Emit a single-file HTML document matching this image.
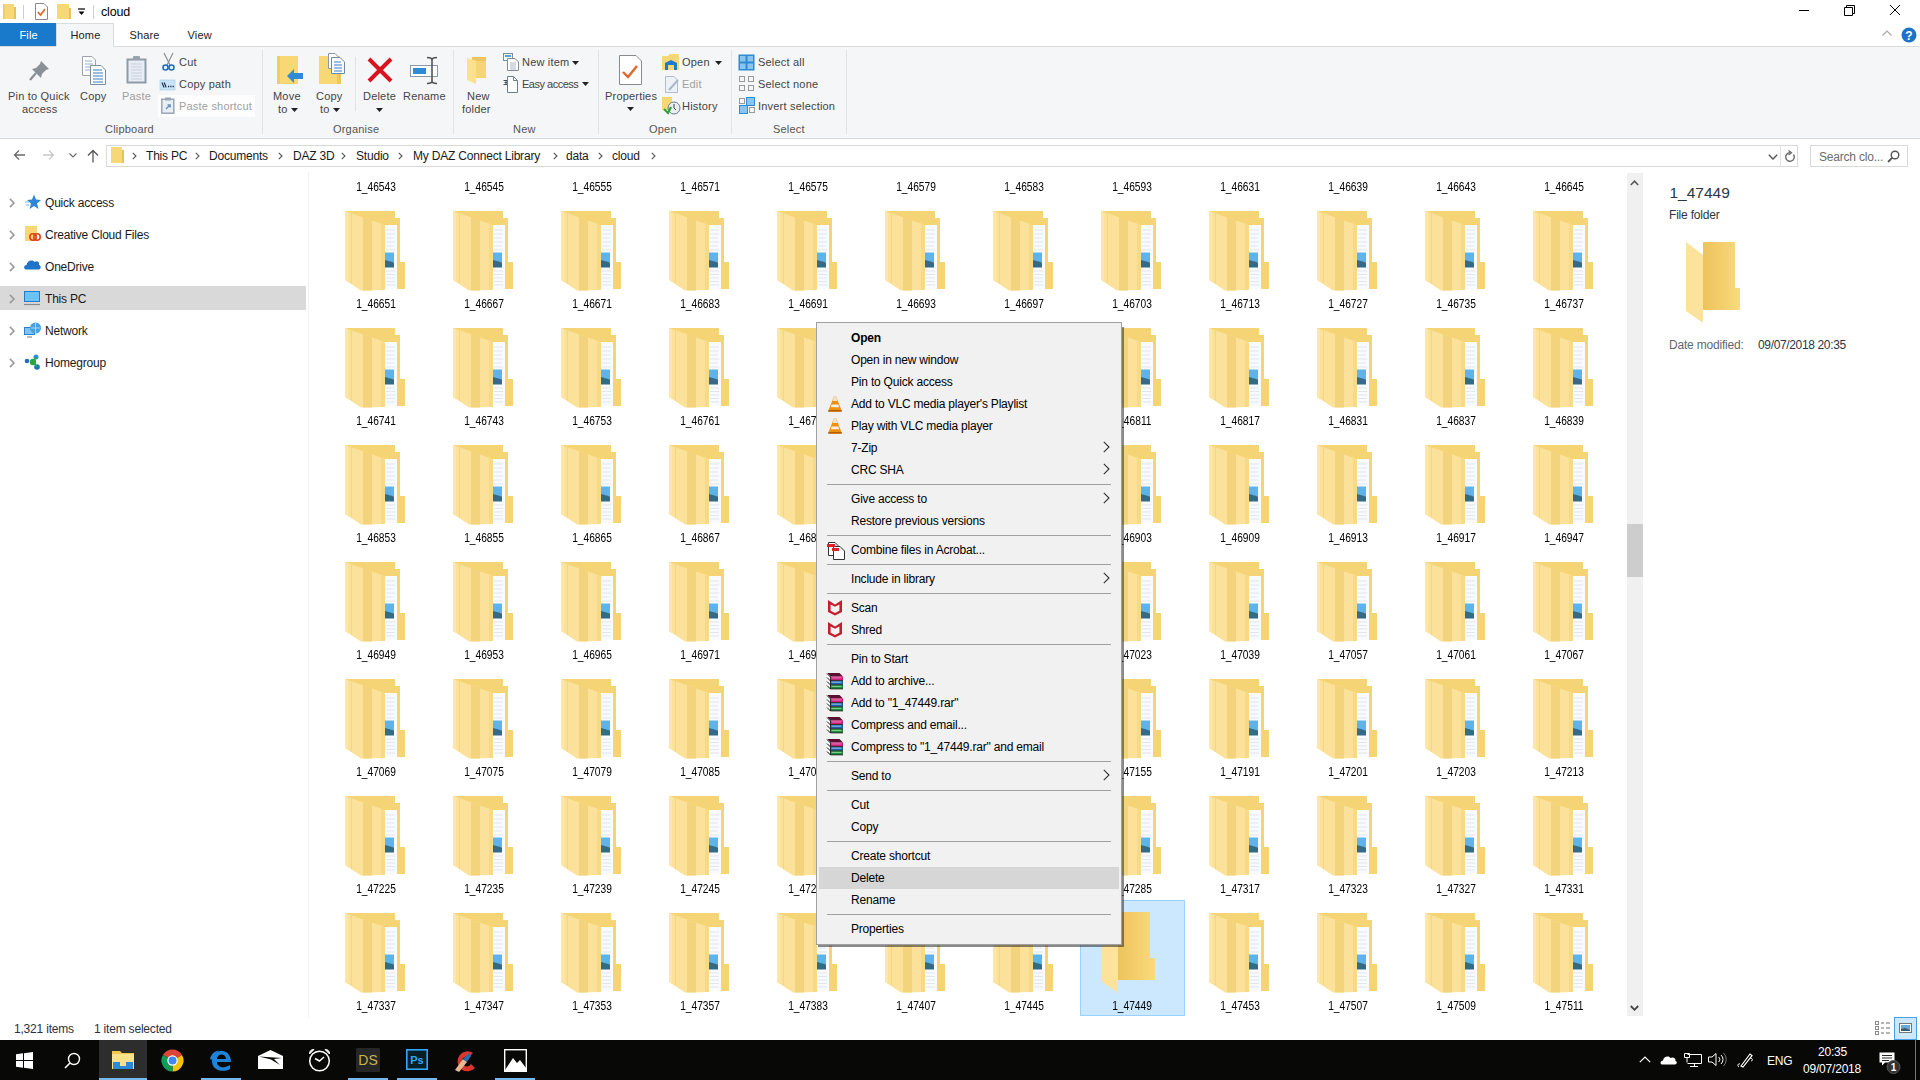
<!DOCTYPE html>
<html><head><meta charset="utf-8"><title>cloud</title><style>
*{margin:0;padding:0;box-sizing:border-box}
html,body{width:1920px;height:1080px;overflow:hidden;background:#fff;font-family:"Liberation Sans",sans-serif;font-size:12px;color:#000}
.a{position:absolute;white-space:nowrap}
.t{position:absolute;white-space:nowrap;line-height:16px;height:16px;letter-spacing:-0.2px}
.g{color:#8d8d8d}
.lbl{position:absolute;white-space:nowrap;line-height:16px;height:16px;width:108px;text-align:center;color:#000;transform:scaleX(0.85)}
svg{position:absolute;overflow:visible}
</style></head>
<body>

<svg width="0" height="0" style="position:absolute">
<defs>
<linearGradient id="gb" x1="0" y1="0" x2="1" y2="0"><stop offset="0" stop-color="#edc35c"/><stop offset="1" stop-color="#f9da7c"/></linearGradient>
<linearGradient id="gf" x1="0" y1="0" x2="1" y2="0"><stop offset="0" stop-color="#fbe39a"/><stop offset="1" stop-color="#f6d57a"/></linearGradient>
<symbol id="fd" viewBox="0 0 62 80">
 <path d="M0 0H50V7H55V51H60V78H38V14L0 2Z" fill="#f5d476"/>
 <path d="M39 14H52V78H39Z" fill="#f8fafc"/>
 <path d="M41 19h9M41 23h9M41 27h8M41 31h9M41 35h8M41 39h9M41 60h9M41 63.5h9M41 67h9M41 70.5h9M41 74h9" stroke="#d8dee6" stroke-width="0.7"/>
 <rect x="40" y="41.5" width="9" height="10" fill="#5fb3ec"/>
 <path d="M40 49L49 51.5V56.5H40Z" fill="#356a86"/>
 <path d="M0 0L40 14V79L16 79.5L0 69Z" fill="#fbe19a"/>
 <path d="M0 0L3 1V71L0 69Z" fill="#fce6a8"/>
 <path d="M6 2.1L7 2.5V73L6 72.3Z" fill="#f4d680"/>
 <path d="M18 6.3L27 9.4V79.5L18 79.5Z" fill="#f3d47c"/>
 <path d="M36 12.6L40 14V79L36 79Z" fill="#f7da86"/>
</symbol>
<symbol id="fe" viewBox="0 0 56 82">
 <path d="M17 0H49V46H54V68H17Z" fill="url(#gb)"/>
 <path d="M0 0L17 13V81L0 69Z" fill="#fce29a"/>
</symbol>
<symbol id="sf" viewBox="0 0 16 16">
 <path d="M1 2H6L7 3H15V14H1Z" fill="#dcb44f"/>
 <path d="M1 4H15V14H1Z" fill="#f8d775"/>
</symbol>
</defs>
</svg>

<svg style="left:13px;top:149px" width="13" height="12" viewBox="0 0 13 12"><path d="M12 6H1.5M6 1.5L1.5 6L6 10.5" fill="none" stroke="#6a6a6a" stroke-width="1.3"/></svg>
<svg style="left:42px;top:149px" width="13" height="12" viewBox="0 0 13 12"><path d="M1 6H11.5M7 1.5L11.5 6L7 10.5" fill="none" stroke="#c9c9c9" stroke-width="1.3"/></svg>
<svg style="left:69px;top:153px" width="8" height="5" viewBox="0 0 8 5"><path d="M0.5 0.5L4 4L7.5 0.5" fill="none" stroke="#6a6a6a" stroke-width="1.1"/></svg>
<svg style="left:87px;top:149px" width="12" height="14" viewBox="0 0 12 14"><path d="M6 13.5V1.5M1 6.5L6 1.5L11 6.5" fill="none" stroke="#555" stroke-width="1.3"/></svg>
<div class="a" style="left:106px;top:145px;width:1692px;height:22px;border:1px solid #d9d9d9"></div>
<div class="a" style="left:1780px;top:146px;width:1px;height:20px;background:#e3e3e3"></div>
<svg style="left:111px;top:147px" width="14" height="17" viewBox="0 0 14 17"><path d="M0 0H11V16H0Z" fill="#f7d879"/><path d="M11 3H13V16H11Z" fill="#e9c05a"/></svg>
<svg style="left:132px;top:152px" width="5" height="8" viewBox="0 0 5 8"><path d="M0.8 0.8L4 4L0.8 7.2" fill="none" stroke="#555" stroke-width="1.1"/></svg>
<svg style="left:195px;top:152px" width="5" height="8" viewBox="0 0 5 8"><path d="M0.8 0.8L4 4L0.8 7.2" fill="none" stroke="#555" stroke-width="1.1"/></svg>
<svg style="left:278px;top:152px" width="5" height="8" viewBox="0 0 5 8"><path d="M0.8 0.8L4 4L0.8 7.2" fill="none" stroke="#555" stroke-width="1.1"/></svg>
<svg style="left:341px;top:152px" width="5" height="8" viewBox="0 0 5 8"><path d="M0.8 0.8L4 4L0.8 7.2" fill="none" stroke="#555" stroke-width="1.1"/></svg>
<svg style="left:398px;top:152px" width="5" height="8" viewBox="0 0 5 8"><path d="M0.8 0.8L4 4L0.8 7.2" fill="none" stroke="#555" stroke-width="1.1"/></svg>
<svg style="left:553px;top:152px" width="5" height="8" viewBox="0 0 5 8"><path d="M0.8 0.8L4 4L0.8 7.2" fill="none" stroke="#555" stroke-width="1.1"/></svg>
<svg style="left:598px;top:152px" width="5" height="8" viewBox="0 0 5 8"><path d="M0.8 0.8L4 4L0.8 7.2" fill="none" stroke="#555" stroke-width="1.1"/></svg>
<svg style="left:651px;top:152px" width="5" height="8" viewBox="0 0 5 8"><path d="M0.8 0.8L4 4L0.8 7.2" fill="none" stroke="#555" stroke-width="1.1"/></svg>
<div class="t" style="left:146px;top:148.0px;color:#1a1a1a">This PC</div>
<div class="t" style="left:209px;top:148.0px;color:#1a1a1a">Documents</div>
<div class="t" style="left:293px;top:148.0px;color:#1a1a1a">DAZ 3D</div>
<div class="t" style="left:356px;top:148.0px;color:#1a1a1a">Studio</div>
<div class="t" style="left:413px;top:148.0px;color:#1a1a1a">My DAZ Connect Library</div>
<div class="t" style="left:566px;top:148.0px;color:#1a1a1a">data</div>
<div class="t" style="left:612px;top:148.0px;color:#1a1a1a">cloud</div>
<svg style="left:1768px;top:154px" width="10" height="6" viewBox="0 0 10 6"><path d="M0.8 0.8L5 5L9.2 0.8" fill="none" stroke="#555" stroke-width="1.4"/></svg>
<svg style="left:1784px;top:150px" width="12" height="13" viewBox="0 0 12 13"><path d="M9.5 4.5A4.3 4.3 0 1 1 6 2.7" fill="none" stroke="#6a6a6a" stroke-width="1.4"/><path d="M4.5 0.5L7.5 2.7L4.5 5" fill="none" stroke="#6a6a6a" stroke-width="1.3"/></svg>
<div class="a" style="left:1810px;top:145px;width:98px;height:22px;border:1px solid #d9d9d9"></div>
<div class="t" style="left:1819px;top:149.0px;color:#6d6d6d">Search clo...</div>
<svg style="left:1887px;top:150px" width="13" height="13" viewBox="0 0 13 13"><circle cx="8" cy="5" r="3.8" fill="none" stroke="#555" stroke-width="1.4"/><path d="M5.3 7.7L1 12" stroke="#555" stroke-width="1.8"/></svg>
<div class="a" style="left:0;top:286px;width:306px;height:24px;background:#d9d9d9"></div>
<svg style="left:9px;top:198px" width="6" height="10" viewBox="0 0 6 10"><path d="M0.9 0.9L5 5L0.9 9.1" fill="none" stroke="#9a9a9a" stroke-width="1.6"/></svg>
<div class="t" style="left:45px;top:194.5px;color:#1a1a1a">Quick access</div>
<svg style="left:9px;top:230px" width="6" height="10" viewBox="0 0 6 10"><path d="M0.9 0.9L5 5L0.9 9.1" fill="none" stroke="#9a9a9a" stroke-width="1.6"/></svg>
<div class="t" style="left:45px;top:226.5px;color:#1a1a1a">Creative Cloud Files</div>
<svg style="left:9px;top:262px" width="6" height="10" viewBox="0 0 6 10"><path d="M0.9 0.9L5 5L0.9 9.1" fill="none" stroke="#9a9a9a" stroke-width="1.6"/></svg>
<div class="t" style="left:45px;top:258.5px;color:#1a1a1a">OneDrive</div>
<svg style="left:9px;top:294px" width="6" height="10" viewBox="0 0 6 10"><path d="M0.9 0.9L5 5L0.9 9.1" fill="none" stroke="#9a9a9a" stroke-width="1.6"/></svg>
<div class="t" style="left:45px;top:290.5px;color:#1a1a1a">This PC</div>
<svg style="left:9px;top:326px" width="6" height="10" viewBox="0 0 6 10"><path d="M0.9 0.9L5 5L0.9 9.1" fill="none" stroke="#9a9a9a" stroke-width="1.6"/></svg>
<div class="t" style="left:45px;top:322.5px;color:#1a1a1a">Network</div>
<svg style="left:9px;top:358px" width="6" height="10" viewBox="0 0 6 10"><path d="M0.9 0.9L5 5L0.9 9.1" fill="none" stroke="#9a9a9a" stroke-width="1.6"/></svg>
<div class="t" style="left:45px;top:354.5px;color:#1a1a1a">Homegroup</div>
<svg style="left:25px;top:194px" width="16" height="16" viewBox="0 0 16 16"><path d="M9 0.5L11 5.5L16 6L12 9.5L13.5 15L9 12L4.5 15L6 9.5L2 6L7 5.5Z" fill="#2f86d6"/><path d="M0 8H4M1 11H4" stroke="#6fb3ea" stroke-width="1.2"/></svg>
<svg style="left:25px;top:226px" width="16" height="17" viewBox="0 0 16 17"><rect x="0" y="0" width="12" height="15" fill="#f7d879"/><circle cx="8" cy="11" r="3.2" fill="none" stroke="#e2401f" stroke-width="1.6"/><circle cx="12" cy="11" r="3.2" fill="none" stroke="#e2401f" stroke-width="1.6"/></svg>
<svg style="left:24px;top:258px" width="17" height="12" viewBox="0 0 17 12"><path d="M2 11.5C-0.5 11.5 -0.5 7 2.5 7C3 3 8 1 10.5 4C13 2 16 4 15 7C17.5 7.5 17 11.5 15 11.5Z" fill="#1f73c8"/></svg>
<svg style="left:24px;top:291px" width="17" height="15" viewBox="0 0 17 15"><rect x="0" y="0" width="16" height="11" fill="#1f7ad0"/><rect x="1" y="1" width="14" height="9" fill="#6cc1f5"/><path d="M0 13.5H16" stroke="#8a8a8a" stroke-width="1.2"/></svg>
<svg style="left:24px;top:322px" width="17" height="16" viewBox="0 0 17 16"><rect x="0" y="5" width="11" height="8" fill="#2b7fd0"/><rect x="1" y="6" width="9" height="6" fill="#7cc5f2"/><circle cx="11.5" cy="6" r="5.5" fill="#4aa0e0"/><path d="M7 6H16M11.5 0.5V11.5" stroke="#bfe3fa" stroke-width="0.8"/><path d="M3 15H8" stroke="#777"/></svg>
<svg style="left:24px;top:354px" width="17" height="16" viewBox="0 0 17 16"><circle cx="3" cy="7" r="2.3" fill="#1f6fc0"/><circle cx="12" cy="3" r="2.5" fill="#2a8ed8"/><circle cx="9" cy="8" r="3.2" fill="#2ba640"/><circle cx="13" cy="13" r="2.8" fill="#1f6fc0"/><path d="M9 8L12 3M9 8L13 13" stroke="#2ba640" stroke-width="1.5"/></svg>
<div class="a" style="left:308px;top:172px;width:1px;height:846px;background:#f2f2f2"></div>
<div class="a" style="left:1080px;top:900px;width:105px;height:116px;background:#cce8ff;border:1px solid #99d1ff"></div>
<div class="lbl" style="left:322px;top:179px">1_46543</div>
<div class="lbl" style="left:430px;top:179px">1_46545</div>
<div class="lbl" style="left:538px;top:179px">1_46555</div>
<div class="lbl" style="left:646px;top:179px">1_46571</div>
<div class="lbl" style="left:754px;top:179px">1_46575</div>
<div class="lbl" style="left:862px;top:179px">1_46579</div>
<div class="lbl" style="left:970px;top:179px">1_46583</div>
<div class="lbl" style="left:1078px;top:179px">1_46593</div>
<div class="lbl" style="left:1186px;top:179px">1_46631</div>
<div class="lbl" style="left:1294px;top:179px">1_46639</div>
<div class="lbl" style="left:1402px;top:179px">1_46643</div>
<div class="lbl" style="left:1510px;top:179px">1_46645</div>
<svg style="left:345px;top:210.5px" width="62" height="80"><use href="#fd"/></svg>
<div class="lbl" style="left:322px;top:296px">1_46651</div>
<svg style="left:453px;top:210.5px" width="62" height="80"><use href="#fd"/></svg>
<div class="lbl" style="left:430px;top:296px">1_46667</div>
<svg style="left:561px;top:210.5px" width="62" height="80"><use href="#fd"/></svg>
<div class="lbl" style="left:538px;top:296px">1_46671</div>
<svg style="left:669px;top:210.5px" width="62" height="80"><use href="#fd"/></svg>
<div class="lbl" style="left:646px;top:296px">1_46683</div>
<svg style="left:777px;top:210.5px" width="62" height="80"><use href="#fd"/></svg>
<div class="lbl" style="left:754px;top:296px">1_46691</div>
<svg style="left:885px;top:210.5px" width="62" height="80"><use href="#fd"/></svg>
<div class="lbl" style="left:862px;top:296px">1_46693</div>
<svg style="left:993px;top:210.5px" width="62" height="80"><use href="#fd"/></svg>
<div class="lbl" style="left:970px;top:296px">1_46697</div>
<svg style="left:1101px;top:210.5px" width="62" height="80"><use href="#fd"/></svg>
<div class="lbl" style="left:1078px;top:296px">1_46703</div>
<svg style="left:1209px;top:210.5px" width="62" height="80"><use href="#fd"/></svg>
<div class="lbl" style="left:1186px;top:296px">1_46713</div>
<svg style="left:1317px;top:210.5px" width="62" height="80"><use href="#fd"/></svg>
<div class="lbl" style="left:1294px;top:296px">1_46727</div>
<svg style="left:1425px;top:210.5px" width="62" height="80"><use href="#fd"/></svg>
<div class="lbl" style="left:1402px;top:296px">1_46735</div>
<svg style="left:1533px;top:210.5px" width="62" height="80"><use href="#fd"/></svg>
<div class="lbl" style="left:1510px;top:296px">1_46737</div>
<svg style="left:345px;top:327.5px" width="62" height="80"><use href="#fd"/></svg>
<div class="lbl" style="left:322px;top:413px">1_46741</div>
<svg style="left:453px;top:327.5px" width="62" height="80"><use href="#fd"/></svg>
<div class="lbl" style="left:430px;top:413px">1_46743</div>
<svg style="left:561px;top:327.5px" width="62" height="80"><use href="#fd"/></svg>
<div class="lbl" style="left:538px;top:413px">1_46753</div>
<svg style="left:669px;top:327.5px" width="62" height="80"><use href="#fd"/></svg>
<div class="lbl" style="left:646px;top:413px">1_46761</div>
<svg style="left:777px;top:327.5px" width="62" height="80"><use href="#fd"/></svg>
<div class="lbl" style="left:754px;top:413px">1_46763</div>
<svg style="left:885px;top:327.5px" width="62" height="80"><use href="#fd"/></svg>
<div class="lbl" style="left:862px;top:413px">1_46779</div>
<svg style="left:993px;top:327.5px" width="62" height="80"><use href="#fd"/></svg>
<div class="lbl" style="left:970px;top:413px">1_46787</div>
<svg style="left:1101px;top:327.5px" width="62" height="80"><use href="#fd"/></svg>
<div class="lbl" style="left:1078px;top:413px">1_46811</div>
<svg style="left:1209px;top:327.5px" width="62" height="80"><use href="#fd"/></svg>
<div class="lbl" style="left:1186px;top:413px">1_46817</div>
<svg style="left:1317px;top:327.5px" width="62" height="80"><use href="#fd"/></svg>
<div class="lbl" style="left:1294px;top:413px">1_46831</div>
<svg style="left:1425px;top:327.5px" width="62" height="80"><use href="#fd"/></svg>
<div class="lbl" style="left:1402px;top:413px">1_46837</div>
<svg style="left:1533px;top:327.5px" width="62" height="80"><use href="#fd"/></svg>
<div class="lbl" style="left:1510px;top:413px">1_46839</div>
<svg style="left:345px;top:444.5px" width="62" height="80"><use href="#fd"/></svg>
<div class="lbl" style="left:322px;top:530px">1_46853</div>
<svg style="left:453px;top:444.5px" width="62" height="80"><use href="#fd"/></svg>
<div class="lbl" style="left:430px;top:530px">1_46855</div>
<svg style="left:561px;top:444.5px" width="62" height="80"><use href="#fd"/></svg>
<div class="lbl" style="left:538px;top:530px">1_46865</div>
<svg style="left:669px;top:444.5px" width="62" height="80"><use href="#fd"/></svg>
<div class="lbl" style="left:646px;top:530px">1_46867</div>
<svg style="left:777px;top:444.5px" width="62" height="80"><use href="#fd"/></svg>
<div class="lbl" style="left:754px;top:530px">1_46871</div>
<svg style="left:885px;top:444.5px" width="62" height="80"><use href="#fd"/></svg>
<div class="lbl" style="left:862px;top:530px">1_46883</div>
<svg style="left:993px;top:444.5px" width="62" height="80"><use href="#fd"/></svg>
<div class="lbl" style="left:970px;top:530px">1_46891</div>
<svg style="left:1101px;top:444.5px" width="62" height="80"><use href="#fd"/></svg>
<div class="lbl" style="left:1078px;top:530px">1_46903</div>
<svg style="left:1209px;top:444.5px" width="62" height="80"><use href="#fd"/></svg>
<div class="lbl" style="left:1186px;top:530px">1_46909</div>
<svg style="left:1317px;top:444.5px" width="62" height="80"><use href="#fd"/></svg>
<div class="lbl" style="left:1294px;top:530px">1_46913</div>
<svg style="left:1425px;top:444.5px" width="62" height="80"><use href="#fd"/></svg>
<div class="lbl" style="left:1402px;top:530px">1_46917</div>
<svg style="left:1533px;top:444.5px" width="62" height="80"><use href="#fd"/></svg>
<div class="lbl" style="left:1510px;top:530px">1_46947</div>
<svg style="left:345px;top:561.5px" width="62" height="80"><use href="#fd"/></svg>
<div class="lbl" style="left:322px;top:647px">1_46949</div>
<svg style="left:453px;top:561.5px" width="62" height="80"><use href="#fd"/></svg>
<div class="lbl" style="left:430px;top:647px">1_46953</div>
<svg style="left:561px;top:561.5px" width="62" height="80"><use href="#fd"/></svg>
<div class="lbl" style="left:538px;top:647px">1_46965</div>
<svg style="left:669px;top:561.5px" width="62" height="80"><use href="#fd"/></svg>
<div class="lbl" style="left:646px;top:647px">1_46971</div>
<svg style="left:777px;top:561.5px" width="62" height="80"><use href="#fd"/></svg>
<div class="lbl" style="left:754px;top:647px">1_46981</div>
<svg style="left:885px;top:561.5px" width="62" height="80"><use href="#fd"/></svg>
<div class="lbl" style="left:862px;top:647px">1_46993</div>
<svg style="left:993px;top:561.5px" width="62" height="80"><use href="#fd"/></svg>
<div class="lbl" style="left:970px;top:647px">1_47001</div>
<svg style="left:1101px;top:561.5px" width="62" height="80"><use href="#fd"/></svg>
<div class="lbl" style="left:1078px;top:647px">1_47023</div>
<svg style="left:1209px;top:561.5px" width="62" height="80"><use href="#fd"/></svg>
<div class="lbl" style="left:1186px;top:647px">1_47039</div>
<svg style="left:1317px;top:561.5px" width="62" height="80"><use href="#fd"/></svg>
<div class="lbl" style="left:1294px;top:647px">1_47057</div>
<svg style="left:1425px;top:561.5px" width="62" height="80"><use href="#fd"/></svg>
<div class="lbl" style="left:1402px;top:647px">1_47061</div>
<svg style="left:1533px;top:561.5px" width="62" height="80"><use href="#fd"/></svg>
<div class="lbl" style="left:1510px;top:647px">1_47067</div>
<svg style="left:345px;top:678.5px" width="62" height="80"><use href="#fd"/></svg>
<div class="lbl" style="left:322px;top:764px">1_47069</div>
<svg style="left:453px;top:678.5px" width="62" height="80"><use href="#fd"/></svg>
<div class="lbl" style="left:430px;top:764px">1_47075</div>
<svg style="left:561px;top:678.5px" width="62" height="80"><use href="#fd"/></svg>
<div class="lbl" style="left:538px;top:764px">1_47079</div>
<svg style="left:669px;top:678.5px" width="62" height="80"><use href="#fd"/></svg>
<div class="lbl" style="left:646px;top:764px">1_47085</div>
<svg style="left:777px;top:678.5px" width="62" height="80"><use href="#fd"/></svg>
<div class="lbl" style="left:754px;top:764px">1_47091</div>
<svg style="left:885px;top:678.5px" width="62" height="80"><use href="#fd"/></svg>
<div class="lbl" style="left:862px;top:764px">1_47109</div>
<svg style="left:993px;top:678.5px" width="62" height="80"><use href="#fd"/></svg>
<div class="lbl" style="left:970px;top:764px">1_47131</div>
<svg style="left:1101px;top:678.5px" width="62" height="80"><use href="#fd"/></svg>
<div class="lbl" style="left:1078px;top:764px">1_47155</div>
<svg style="left:1209px;top:678.5px" width="62" height="80"><use href="#fd"/></svg>
<div class="lbl" style="left:1186px;top:764px">1_47191</div>
<svg style="left:1317px;top:678.5px" width="62" height="80"><use href="#fd"/></svg>
<div class="lbl" style="left:1294px;top:764px">1_47201</div>
<svg style="left:1425px;top:678.5px" width="62" height="80"><use href="#fd"/></svg>
<div class="lbl" style="left:1402px;top:764px">1_47203</div>
<svg style="left:1533px;top:678.5px" width="62" height="80"><use href="#fd"/></svg>
<div class="lbl" style="left:1510px;top:764px">1_47213</div>
<svg style="left:345px;top:795.5px" width="62" height="80"><use href="#fd"/></svg>
<div class="lbl" style="left:322px;top:881px">1_47225</div>
<svg style="left:453px;top:795.5px" width="62" height="80"><use href="#fd"/></svg>
<div class="lbl" style="left:430px;top:881px">1_47235</div>
<svg style="left:561px;top:795.5px" width="62" height="80"><use href="#fd"/></svg>
<div class="lbl" style="left:538px;top:881px">1_47239</div>
<svg style="left:669px;top:795.5px" width="62" height="80"><use href="#fd"/></svg>
<div class="lbl" style="left:646px;top:881px">1_47245</div>
<svg style="left:777px;top:795.5px" width="62" height="80"><use href="#fd"/></svg>
<div class="lbl" style="left:754px;top:881px">1_47251</div>
<svg style="left:885px;top:795.5px" width="62" height="80"><use href="#fd"/></svg>
<div class="lbl" style="left:862px;top:881px">1_47263</div>
<svg style="left:993px;top:795.5px" width="62" height="80"><use href="#fd"/></svg>
<div class="lbl" style="left:970px;top:881px">1_47271</div>
<svg style="left:1101px;top:795.5px" width="62" height="80"><use href="#fd"/></svg>
<div class="lbl" style="left:1078px;top:881px">1_47285</div>
<svg style="left:1209px;top:795.5px" width="62" height="80"><use href="#fd"/></svg>
<div class="lbl" style="left:1186px;top:881px">1_47317</div>
<svg style="left:1317px;top:795.5px" width="62" height="80"><use href="#fd"/></svg>
<div class="lbl" style="left:1294px;top:881px">1_47323</div>
<svg style="left:1425px;top:795.5px" width="62" height="80"><use href="#fd"/></svg>
<div class="lbl" style="left:1402px;top:881px">1_47327</div>
<svg style="left:1533px;top:795.5px" width="62" height="80"><use href="#fd"/></svg>
<div class="lbl" style="left:1510px;top:881px">1_47331</div>
<svg style="left:345px;top:912.5px" width="62" height="80"><use href="#fd"/></svg>
<div class="lbl" style="left:322px;top:998px">1_47337</div>
<svg style="left:453px;top:912.5px" width="62" height="80"><use href="#fd"/></svg>
<div class="lbl" style="left:430px;top:998px">1_47347</div>
<svg style="left:561px;top:912.5px" width="62" height="80"><use href="#fd"/></svg>
<div class="lbl" style="left:538px;top:998px">1_47353</div>
<svg style="left:669px;top:912.5px" width="62" height="80"><use href="#fd"/></svg>
<div class="lbl" style="left:646px;top:998px">1_47357</div>
<svg style="left:777px;top:912.5px" width="62" height="80"><use href="#fd"/></svg>
<div class="lbl" style="left:754px;top:998px">1_47383</div>
<svg style="left:885px;top:912.5px" width="62" height="80"><use href="#fd"/></svg>
<div class="lbl" style="left:862px;top:998px">1_47407</div>
<svg style="left:993px;top:912.5px" width="62" height="80"><use href="#fd"/></svg>
<div class="lbl" style="left:970px;top:998px">1_47445</div>
<svg style="left:1101px;top:911.5px" width="56" height="82"><use href="#fe"/></svg>
<div class="lbl" style="left:1078px;top:998px">1_47449</div>
<svg style="left:1209px;top:912.5px" width="62" height="80"><use href="#fd"/></svg>
<div class="lbl" style="left:1186px;top:998px">1_47453</div>
<svg style="left:1317px;top:912.5px" width="62" height="80"><use href="#fd"/></svg>
<div class="lbl" style="left:1294px;top:998px">1_47507</div>
<svg style="left:1425px;top:912.5px" width="62" height="80"><use href="#fd"/></svg>
<div class="lbl" style="left:1402px;top:998px">1_47509</div>
<svg style="left:1533px;top:912.5px" width="62" height="80"><use href="#fd"/></svg>
<div class="lbl" style="left:1510px;top:998px">1_47511</div>
<div class="a" style="left:1627px;top:173px;width:16px;height:843px;background:#f0f0f0"></div>
<div class="a" style="left:1627px;top:524px;width:16px;height:53px;background:#cdcdcd"></div>
<svg style="left:1630px;top:180px" width="9" height="6" viewBox="0 0 9 6"><path d="M0.8 5L4.5 1.2L8.2 5" fill="none" stroke="#555" stroke-width="1.5"/></svg>
<svg style="left:1630px;top:1005px" width="9" height="6" viewBox="0 0 9 6"><path d="M0.8 1L4.5 4.8L8.2 1" fill="none" stroke="#444" stroke-width="1.8"/></svg>
<div class="t" style="left:1669.5px;top:184.5px;font-size:15.5px;color:#2a3645;letter-spacing:0px">1_47449</div>
<div class="t" style="left:1669px;top:207.0px;color:#2a3645">File folder</div>
<svg style="left:1686px;top:242px" width="56" height="82" viewBox="0 0 56 82"><use href="#fe"/></svg>
<div class="t" style="left:1669px;top:337.0px;color:#5f6873">Date modified:</div>
<div class="t" style="left:1758px;top:337.0px;color:#2a3645;letter-spacing:-0.35px">09/07/2018 20:35</div>
<div class="t" style="left:14px;top:1021.0px;color:#2a3240">1,321 items</div>
<div class="t" style="left:94px;top:1021.0px;color:#2a3240">1 item selected</div>
<svg style="left:1875px;top:1021px" width="16" height="14" viewBox="0 0 16 14"><rect x="0.5" y="0.5" width="3" height="3" fill="none" stroke="#888"/><rect x="0.5" y="5.5" width="3" height="3" fill="none" stroke="#888"/><rect x="0.5" y="10.5" width="3" height="3" fill="none" stroke="#888"/><path d="M6 2H9M11 2H15M6 7H9M11 7H15M6 12H9M11 12H15" stroke="#6a6a6a"/></svg>
<div class="a" style="left:1894px;top:1017px;width:23px;height:23px;background:#cce8ff;border:1px solid #4aa0e6"></div>
<svg style="left:1899px;top:1023px" width="13" height="10" viewBox="0 0 13 10"><rect x="0.5" y="0.5" width="12" height="9" fill="#fff" stroke="#777"/><rect x="2" y="2" width="9" height="6" fill="#6aa8d8"/><path d="M2 6L6 5L11 7V8H2Z" fill="#3a5a6a"/></svg>
<svg style="left:3px;top:4px" width="14" height="16" viewBox="0 0 14 16"><path d="M0 0H11V15H0Z" fill="#f7d879"/><path d="M11 3H13V15H11Z" fill="#e9c05a"/><path d="M0 0H2V15H0Z" fill="#f0cc6a"/></svg>
<div class="a" style="left:23px;top:5px;width:1px;height:14px;background:#cfcfcf"></div>
<svg style="left:35px;top:3px" width="13" height="17" viewBox="0 0 13 17"><path d="M0.5 0.5H9L12.5 4V16.5H0.5Z" fill="#fff" stroke="#8a8a8a"/><path d="M3 9L5.5 12L10 6" fill="none" stroke="#e06b2d" stroke-width="1.8"/></svg>
<svg style="left:57px;top:4px" width="14" height="16" viewBox="0 0 14 16"><path d="M0 0H12V15H0Z" fill="#f7d879"/><path d="M12 4H14V15H12Z" fill="#e9c05a"/></svg>
<svg style="left:78px;top:8px" width="8" height="8" viewBox="0 0 8 8"><path d="M0 1H7" stroke="#000" stroke-width="1.2"/><path d="M0.5 3.5H6.5L3.5 7Z" fill="#000"/></svg>
<div class="a" style="left:93px;top:5px;width:1px;height:14px;background:#cfcfcf"></div>
<div class="t" style="left:101px;top:4.0px;font-size:12.5px">cloud</div>
<div class="a" style="left:1799px;top:10px;width:10px;height:1px;background:#000"></div>
<svg style="left:1844px;top:5px" width="11" height="11" viewBox="0 0 11 11"><path d="M0.5 2.5H8.5V10.5H0.5Z M2.5 2.5V0.5H10.5V8.5H8.5" fill="none" stroke="#000"/></svg>
<svg style="left:1890px;top:5px" width="10" height="10" viewBox="0 0 10 10"><path d="M0 0L10 10M10 0L0 10" stroke="#000" stroke-width="1"/></svg>
<div class="a" style="left:0;top:23px;width:56px;height:23px;background:#1979ca"></div>
<div class="t" style="left:19.5px;top:27.0px;color:#fff;font-size:11px;letter-spacing:0.15px">File</div>
<div class="a" style="left:56px;top:23px;width:58px;height:24px;background:#f5f6f7;border:1px solid #dadbdc;border-bottom:none"></div>
<div class="t" style="left:70.5px;top:27.0px;font-size:11px;letter-spacing:0.15px;color:#222">Home</div>
<div class="t" style="left:129.4px;top:27.0px;font-size:11px;letter-spacing:0.15px;color:#222">Share</div>
<div class="t" style="left:187.5px;top:27.0px;font-size:11px;letter-spacing:0.15px;color:#222">View</div>
<div class="a" style="left:0;top:46px;width:1920px;height:93px;background:#f5f6f7;border-top:1px solid #dadbdc;border-bottom:1px solid #dadbdc"></div>
<div class="a" style="left:56px;top:46px;width:57px;height:1px;background:#f5f6f7"></div>
<svg style="left:1882px;top:30px" width="10" height="6" viewBox="0 0 10 6"><path d="M0.5 5.5L5 1L9.5 5.5" fill="none" stroke="#aaa" stroke-width="1.2"/></svg>
<svg style="left:1901px;top:27px" width="16" height="16" viewBox="0 0 16 16"><circle cx="8" cy="8" r="7.5" fill="#1e73c8"/><text x="8" y="12.5" font-family="Liberation Sans" font-weight="bold" font-size="12" fill="#fff" text-anchor="middle">?</text></svg>
<div class="a" style="left:262px;top:50px;width:1px;height:84px;background:#e2e3e4"></div>
<div class="a" style="left:453px;top:50px;width:1px;height:84px;background:#e2e3e4"></div>
<div class="a" style="left:598px;top:50px;width:1px;height:84px;background:#e2e3e4"></div>
<div class="a" style="left:731px;top:50px;width:1px;height:84px;background:#e2e3e4"></div>
<div class="a" style="left:846px;top:50px;width:1px;height:84px;background:#e2e3e4"></div>
<div class="a" style="left:355px;top:57px;width:1px;height:54px;background:#e2e3e4"></div>
<div class="a" style="left:158px;top:95px;width:97px;height:22px;background:#fdfdfd"></div>
<svg style="left:29px;top:60px" width="21" height="21" viewBox="0 0 21 21"><path d="M12 1L20 9L17 10L13 14L12 18L3 9L7 8L11 4Z" fill="#8a9096"/><path d="M7 13L1 20" stroke="#8a9096" stroke-width="2.2"/></svg>
<svg style="left:82px;top:56px" width="25" height="29" viewBox="0 0 25 29"><path d="M0.5 0.5H10L13.5 4V19.5H0.5Z" fill="#fff" stroke="#9aa3ad"/><path d="M3 5h7M3 8h8M3 11h8M3 14h8" stroke="#8fb0d6"/><path d="M8.5 9.5H19L23.5 14V28.5H8.5Z" fill="#fff" stroke="#7f8c99"/><path d="M11 14h9M11 17h10M11 20h10M11 23h10M11 26h10" stroke="#3a7cc8"/></svg>
<svg style="left:126px;top:55px" width="21" height="30" viewBox="0 0 21 30"><rect x="0.5" y="3.5" width="20" height="25" fill="#8e9aa6"/><rect x="2.5" y="5.5" width="16" height="21" fill="#e8ecf4"/><path d="M5 9h11M5 12h11M5 15h11M5 18h11M5 21h11M5 24h11" stroke="#c9d0dc"/><rect x="7" y="1" width="7" height="4" rx="1" fill="#9aa3ad"/></svg>
<svg style="left:162px;top:53px" width="13" height="18" viewBox="0 0 13 18"><path d="M2 0L8 12M11 0L5 12" stroke="#8a9096" stroke-width="1.2"/><circle cx="3.5" cy="14.5" r="2.5" fill="none" stroke="#1e6fc0" stroke-width="1.6"/><circle cx="9.5" cy="14.5" r="2.5" fill="none" stroke="#1e6fc0" stroke-width="1.6"/></svg>
<svg style="left:160px;top:80px" width="16" height="10" viewBox="0 0 16 10"><rect x="0" y="0" width="15" height="10" fill="#c9e4f8" stroke="#a6c8e6" stroke-width="0.6"/><path d="M2 2.5L4 7.5M4.2 2.5L6.2 7.5" stroke="#14284a" stroke-width="1.1"/><path d="M8 6.5h1.2M10.3 6.5h1.2M12.6 6.5h1.2" stroke="#14284a" stroke-width="1.3"/></svg>
<svg style="left:161px;top:97px" width="14" height="17" viewBox="0 0 14 17"><rect x="0.8" y="2.2" width="12" height="14" fill="#e8eef6" stroke="#9aa6b4" stroke-width="1.5"/><rect x="4" y="0.5" width="6" height="3" fill="#9aa6b4"/><path d="M5 12L9 8M6.5 7.8H9.2V10.5" stroke="#6b8fb8" fill="none" stroke-width="1.3"/></svg>
<div class="t" style="left:8px;top:88.0px;color:#444;font-size:11px;letter-spacing:0.2px">Pin to Quick</div>
<div class="t" style="left:22px;top:100.5px;color:#444;font-size:11px;letter-spacing:0.2px">access</div>
<div class="t" style="left:80px;top:88.0px;color:#444;font-size:11px;letter-spacing:0.2px">Copy</div>
<div class="t" style="left:122px;top:88.0px;color:#a0a0a0;font-size:11px;letter-spacing:0.2px">Paste</div>
<div class="t" style="left:179px;top:54.0px;color:#444;font-size:11px;letter-spacing:0.2px">Cut</div>
<div class="t" style="left:179px;top:76.0px;color:#444;font-size:11px;letter-spacing:0.2px">Copy path</div>
<div class="t" style="left:179px;top:98.0px;color:#a0a0a0;font-size:11px;letter-spacing:0.2px">Paste shortcut</div>
<div class="t" style="left:105px;top:121.0px;color:#555;font-size:11px;letter-spacing:0.2px">Clipboard</div>
<svg style="left:277px;top:56px" width="27" height="29" viewBox="0 0 27 29"><rect x="0" y="0" width="21" height="28" fill="#f8d775"/><rect x="0" y="0" width="3" height="28" fill="#f1cb63"/><path d="M10 20L17 13V17H26V23H17V27Z" fill="#2f8ad8"/></svg>
<svg style="left:319px;top:53px" width="27" height="32" viewBox="0 0 27 32"><rect x="0" y="3" width="21" height="28" fill="#f8d775"/><rect x="18" y="5" width="4" height="26" fill="#efc65e"/><path d="M9.5 0.5H16L19.5 4V15.5H9.5Z" fill="#fff" stroke="#8a97a4"/><path d="M12.5 4.5H21L25.5 9V20.5H12.5Z" fill="#fff" stroke="#6f8aa8"/><path d="M15 9h7M15 12h8M15 15h8M15 18h8" stroke="#3a7cc8"/></svg>
<svg style="left:367px;top:57px" width="26" height="26" viewBox="0 0 26 26"><path d="M2 2L24 24M24 2L2 24" stroke="#d9141e" stroke-width="4"/></svg>
<svg style="left:409px;top:56px" width="30" height="29" viewBox="0 0 30 29"><rect x="1.5" y="9.5" width="27" height="11" fill="#fff" stroke="#8a9aaa"/><rect x="4" y="12" width="13" height="6" fill="#2f8ad8"/><path d="M18 1.5C21 1.5 23 2 23 4V25C23 27 21 27.5 18 27.5M28 1.5C25 1.5 23 2 23 4V25C23 27 25 27.5 28 27.5" fill="none" stroke="#555" stroke-width="1.6"/></svg>
<div class="t" style="left:273px;top:88.0px;color:#444;font-size:11px;letter-spacing:0.2px">Move</div>
<div class="t" style="left:278px;top:100.5px;color:#444;font-size:11px;letter-spacing:0.2px">to</div>
<div class="t" style="left:316px;top:88.0px;color:#444;font-size:11px;letter-spacing:0.2px">Copy</div>
<div class="t" style="left:320px;top:100.5px;color:#444;font-size:11px;letter-spacing:0.2px">to</div>
<div class="t" style="left:363px;top:88.0px;color:#444;font-size:11px;letter-spacing:0.2px">Delete</div>
<div class="t" style="left:403px;top:88.0px;color:#444;font-size:11px;letter-spacing:0.2px">Rename</div>
<div class="t" style="left:333px;top:121.0px;color:#555;font-size:11px;letter-spacing:0.2px">Organise</div>
<svg style="left:291px;top:108px" width="7" height="4" viewBox="0 0 7 4"><path d="M0 0H7L3.5 4Z" fill="#222"/></svg>
<svg style="left:333px;top:108px" width="7" height="4" viewBox="0 0 7 4"><path d="M0 0H7L3.5 4Z" fill="#222"/></svg>
<svg style="left:376px;top:108px" width="7" height="4" viewBox="0 0 7 4"><path d="M0 0H7L3.5 4Z" fill="#222"/></svg>
<svg style="left:572px;top:61px" width="7" height="4" viewBox="0 0 7 4"><path d="M0 0H7L3.5 4Z" fill="#222"/></svg>
<svg style="left:582px;top:82px" width="7" height="4" viewBox="0 0 7 4"><path d="M0 0H7L3.5 4Z" fill="#222"/></svg>
<svg style="left:715px;top:61px" width="7" height="4" viewBox="0 0 7 4"><path d="M0 0H7L3.5 4Z" fill="#222"/></svg>
<svg style="left:627px;top:107px" width="7" height="4" viewBox="0 0 7 4"><path d="M0 0H7L3.5 4Z" fill="#222"/></svg>
<svg style="left:467px;top:57px" width="21" height="27" viewBox="0 0 21 27"><path d="M5 0H19V21H5Z" fill="#efc65e"/><path d="M0 1L9 4V27L0 23Z" fill="#fbe08e"/><path d="M9 4H19V21H9Z" fill="#f6d574"/></svg>
<svg style="left:503px;top:53px" width="17" height="18" viewBox="0 0 17 18"><rect x="0.5" y="0.5" width="9" height="7" fill="#fff" stroke="#7f8c99"/><rect x="2" y="2" width="6" height="2" fill="#5aa0dc"/><path d="M4.5 5.5H12L15.5 9V17.5H4.5Z" fill="#fff" stroke="#7f8c99"/><path d="M7 10h6M7 12h6M7 14h6M7 16h6" stroke="#aab6c2"/></svg>
<svg style="left:503px;top:75px" width="15" height="18" viewBox="0 0 15 18"><path d="M4.5 1.5H10.5L14.5 5.5V17.5H4.5Z" fill="#fff" stroke="#6f7c8a"/><path d="M10.5 1.5V5.5H14.5" fill="none" stroke="#6f7c8a"/><path d="M0.5 5.5H4M1.5 7.5H4M0.5 9.5H4M3 5V10" stroke="#3a4450" stroke-width="0.9"/></svg>
<div class="t" style="left:467px;top:88.0px;color:#444;font-size:11px;letter-spacing:0.2px">New</div>
<div class="t" style="left:462px;top:100.5px;color:#444;font-size:11px;letter-spacing:0.2px">folder</div>
<div class="t" style="left:522px;top:54.0px;color:#444;font-size:11px;letter-spacing:0.2px">New item</div>
<div class="t" style="left:522px;top:76.0px;color:#444;font-size:11px;letter-spacing:0.2px;letter-spacing:-0.5px">Easy access</div>
<div class="t" style="left:513px;top:121.0px;color:#555;font-size:11px;letter-spacing:0.2px">New</div>
<svg style="left:619px;top:55px" width="23" height="30" viewBox="0 0 23 30"><path d="M0.5 0.5H17L22.5 6V29.5H0.5Z" fill="#fff" stroke="#8a8a8a"/><path d="M4 17L9 22L18 11" fill="none" stroke="#e0652a" stroke-width="2.4"/></svg>
<svg style="left:662px;top:53px" width="18" height="18" viewBox="0 0 18 18"><path d="M0 3H6L8 1H17V17H0Z" fill="#f8d775"/><path d="M3 17V10L9 7L15 10V17H12V12H6V17Z" fill="#1f7ac8"/></svg>
<svg style="left:665px;top:76px" width="15" height="17" viewBox="0 0 15 17"><path d="M0.5 0.5H9L12.5 4V16.5H0.5Z" fill="#eef1f6" stroke="#b3bcc8"/><path d="M4 14L13 4" stroke="#aab6c8" stroke-width="2"/></svg>
<svg style="left:662px;top:97px" width="19" height="18" viewBox="0 0 19 18"><path d="M0 0H10V13H0Z" fill="#f8d775"/><circle cx="12" cy="11" r="6" fill="#e8eef4" stroke="#6a7a8a"/><path d="M12 7V11L14 13" stroke="#444" fill="none"/><path d="M2 12L6 16L9 10" stroke="#2ea43a" stroke-width="2.2" fill="none"/></svg>
<div class="t" style="left:605px;top:88.0px;color:#444;font-size:11px;letter-spacing:0.2px">Properties</div>
<div class="t" style="left:682px;top:54.0px;color:#444;font-size:11px;letter-spacing:0.2px">Open</div>
<div class="t" style="left:682px;top:76.0px;color:#a0a0a0;font-size:11px;letter-spacing:0.2px">Edit</div>
<div class="t" style="left:682px;top:98.0px;color:#444;font-size:11px;letter-spacing:0.2px">History</div>
<div class="t" style="left:649px;top:121.0px;color:#555;font-size:11px;letter-spacing:0.2px">Open</div>
<svg style="left:738px;top:54px" width="17" height="17" viewBox="0 0 17 17"><rect x="0.5" y="0.5" width="16" height="16" fill="#2f8ad8"/><rect x="2" y="2" width="5.5" height="5.5" fill="#8cc4f0"/><rect x="9.5" y="2" width="5.5" height="5.5" fill="#8cc4f0"/><rect x="2" y="9.5" width="5.5" height="5.5" fill="#8cc4f0"/><rect x="9.5" y="9.5" width="5.5" height="5.5" fill="#8cc4f0"/></svg>
<svg style="left:739px;top:76px" width="16" height="16" viewBox="0 0 16 16"><rect x="0.5" y="0.5" width="5" height="5" fill="none" stroke="#9a9a9a"/><rect x="9.5" y="0.5" width="5" height="5" fill="none" stroke="#9a9a9a"/><rect x="0.5" y="9.5" width="5" height="5" fill="none" stroke="#9a9a9a"/><rect x="9.5" y="9.5" width="5" height="5" fill="none" stroke="#9a9a9a"/></svg>
<svg style="left:739px;top:97px" width="16" height="17" viewBox="0 0 16 17"><rect x="0.5" y="1.5" width="5" height="5" fill="none" stroke="#9a9a9a"/><rect x="7.5" y="0.5" width="8" height="8" fill="#8cc4f0" stroke="#2f8ad8"/><rect x="0.5" y="8.5" width="8" height="8" fill="#8cc4f0" stroke="#2f8ad8"/><rect x="10.5" y="10.5" width="5" height="5" fill="none" stroke="#9a9a9a"/></svg>
<div class="t" style="left:758px;top:54.0px;color:#444;font-size:11px;letter-spacing:0.2px">Select all</div>
<div class="t" style="left:758px;top:76.0px;color:#444;font-size:11px;letter-spacing:0.2px">Select none</div>
<div class="t" style="left:758px;top:98.0px;color:#444;font-size:11px;letter-spacing:0.2px">Invert selection</div>
<div class="t" style="left:773px;top:121.0px;color:#555;font-size:11px;letter-spacing:0.2px">Select</div>
<div class="a" style="left:818px;top:327px;width:306px;height:620px;background:rgba(40,40,40,0.55);filter:blur(0.7px)"></div>
<div class="a" style="left:816px;top:322px;width:306px;height:623px;background:#f1f1f1;border:1px solid #a0a0a0"></div>
<div class="a" style="left:819px;top:867px;width:300px;height:22px;background:#d6d6d6"></div>
<div class="t" style="left:851px;top:330.0px;color:#000;font-weight:bold">Open</div>
<div class="t" style="left:851px;top:352.0px;color:#000">Open in new window</div>
<div class="t" style="left:851px;top:374.0px;color:#000">Pin to Quick access</div>
<div class="t" style="left:851px;top:396.0px;color:#000">Add to VLC media player's Playlist</div>
<div class="t" style="left:851px;top:418.0px;color:#000">Play with VLC media player</div>
<div class="t" style="left:851px;top:440.0px;color:#000">7-Zip</div>
<div class="t" style="left:851px;top:462.0px;color:#000">CRC SHA</div>
<div class="t" style="left:851px;top:491.0px;color:#000">Give access to</div>
<div class="t" style="left:851px;top:513.0px;color:#000">Restore previous versions</div>
<div class="t" style="left:851px;top:542.0px;color:#000">Combine files in Acrobat...</div>
<div class="t" style="left:851px;top:571.0px;color:#000">Include in library</div>
<div class="t" style="left:851px;top:600.0px;color:#000">Scan</div>
<div class="t" style="left:851px;top:622.0px;color:#000">Shred</div>
<div class="t" style="left:851px;top:651.0px;color:#000">Pin to Start</div>
<div class="t" style="left:851px;top:673.0px;color:#000">Add to archive...</div>
<div class="t" style="left:851px;top:695.0px;color:#000">Add to &quot;1_47449.rar&quot;</div>
<div class="t" style="left:851px;top:717.0px;color:#000">Compress and email...</div>
<div class="t" style="left:851px;top:739.0px;color:#000">Compress to &quot;1_47449.rar&quot; and email</div>
<div class="t" style="left:851px;top:768.0px;color:#000">Send to</div>
<div class="t" style="left:851px;top:797.0px;color:#000">Cut</div>
<div class="t" style="left:851px;top:819.0px;color:#000">Copy</div>
<div class="t" style="left:851px;top:848.0px;color:#000">Create shortcut</div>
<div class="t" style="left:851px;top:870.0px;color:#000">Delete</div>
<div class="t" style="left:851px;top:892.0px;color:#000">Rename</div>
<div class="t" style="left:851px;top:921.0px;color:#000">Properties</div>
<div class="a" style="left:827px;top:484px;width:284px;height:1px;background:#a0a0a0"></div>
<div class="a" style="left:827px;top:535px;width:284px;height:1px;background:#a0a0a0"></div>
<div class="a" style="left:827px;top:564px;width:284px;height:1px;background:#a0a0a0"></div>
<div class="a" style="left:827px;top:593px;width:284px;height:1px;background:#a0a0a0"></div>
<div class="a" style="left:827px;top:644px;width:284px;height:1px;background:#a0a0a0"></div>
<div class="a" style="left:827px;top:761px;width:284px;height:1px;background:#a0a0a0"></div>
<div class="a" style="left:827px;top:790px;width:284px;height:1px;background:#a0a0a0"></div>
<div class="a" style="left:827px;top:841px;width:284px;height:1px;background:#a0a0a0"></div>
<div class="a" style="left:827px;top:914px;width:284px;height:1px;background:#a0a0a0"></div>
<svg style="left:1103px;top:441px" width="7" height="12" viewBox="0 0 7 12"><path d="M0.8 0.8L6 6L0.8 11.2" fill="none" stroke="#333" stroke-width="1.1"/></svg>
<svg style="left:1103px;top:463px" width="7" height="12" viewBox="0 0 7 12"><path d="M0.8 0.8L6 6L0.8 11.2" fill="none" stroke="#333" stroke-width="1.1"/></svg>
<svg style="left:1103px;top:492px" width="7" height="12" viewBox="0 0 7 12"><path d="M0.8 0.8L6 6L0.8 11.2" fill="none" stroke="#333" stroke-width="1.1"/></svg>
<svg style="left:1103px;top:572px" width="7" height="12" viewBox="0 0 7 12"><path d="M0.8 0.8L6 6L0.8 11.2" fill="none" stroke="#333" stroke-width="1.1"/></svg>
<svg style="left:1103px;top:769px" width="7" height="12" viewBox="0 0 7 12"><path d="M0.8 0.8L6 6L0.8 11.2" fill="none" stroke="#333" stroke-width="1.1"/></svg>
<svg style="left:828px;top:396px" width="14" height="16" viewBox="0 0 14 16"><path d="M6 0.3H8L14 15.5H0Z" fill="#f0900f"/><path d="M6 0.3H8L9.5 5H4.5Z" fill="#efe2c8"/><path d="M3.6 8.6H10.4L11.2 11.2H2.8Z" fill="#f6eee4"/><path d="M0.3 14.2H13.7V15.6H0.3Z" fill="#a85200"/></svg>
<svg style="left:828px;top:418px" width="14" height="16" viewBox="0 0 14 16"><path d="M6 0.3H8L14 15.5H0Z" fill="#f0900f"/><path d="M6 0.3H8L9.5 5H4.5Z" fill="#efe2c8"/><path d="M3.6 8.6H10.4L11.2 11.2H2.8Z" fill="#f6eee4"/><path d="M0.3 14.2H13.7V15.6H0.3Z" fill="#a85200"/></svg>
<svg style="left:827px;top:541px" width="20" height="19" viewBox="0 0 20 19"><path d="M1.5 1.5H8L11.5 5V14.5H1.5Z" fill="#fff" stroke="#333"/><path d="M6.5 5.5H13L17.5 10V18.5H6.5Z" fill="#fff" stroke="#333"/><rect x="0" y="3" width="8" height="3" fill="#e0202a"/><rect x="5" y="7" width="7" height="3" fill="#e0202a"/></svg>
<svg style="left:828px;top:600px" width="14" height="16" viewBox="0 0 14 16"><path d="M0 0L7 4.5L14 0V12L7 15.5L0 12Z" fill="#c41f2c"/><path d="M2.6 4.6L7 6.8L11.4 4.6V10.8L7 13L2.6 10.8Z" fill="#f4f4f4"/></svg>
<svg style="left:828px;top:622px" width="14" height="16" viewBox="0 0 14 16"><path d="M0 0L7 4.5L14 0V12L7 15.5L0 12Z" fill="#c41f2c"/><path d="M2.6 4.6L7 6.8L11.4 4.6V10.8L7 13L2.6 10.8Z" fill="#f4f4f4"/></svg>
<svg style="left:827px;top:673px" width="17" height="17" viewBox="0 0 17 17"><path d="M0 0H12.5L16 3.5H3.5Z" fill="#5a1030"/><path d="M0 0L3.5 3.5V16L0 12.5Z" fill="#fff"/><path d="M0 0.5L3.5 4M0 4.5L3.5 8M0 8.5L3.5 12M0 12.5L3.5 16" stroke="#111" stroke-width="1"/><rect x="3.5" y="3.5" width="12.5" height="4" fill="#c81e74"/><rect x="4.5" y="4.3" width="10" height="1.2" fill="#f070b8"/><rect x="3.5" y="7.7" width="12.5" height="4" fill="#1f5fa8"/><rect x="4.5" y="8.5" width="10" height="1.2" fill="#8ac0f0"/><rect x="3.5" y="11.9" width="12.5" height="4" fill="#218a3c"/><rect x="4.5" y="12.7" width="10" height="1.2" fill="#7cd890"/><path d="M3.5 7.6H16M3.5 11.8H16M3.5 15.9H16M3.5 3.5V16" stroke="#111" stroke-width="0.8"/></svg>
<svg style="left:827px;top:695px" width="17" height="17" viewBox="0 0 17 17"><path d="M0 0H12.5L16 3.5H3.5Z" fill="#5a1030"/><path d="M0 0L3.5 3.5V16L0 12.5Z" fill="#fff"/><path d="M0 0.5L3.5 4M0 4.5L3.5 8M0 8.5L3.5 12M0 12.5L3.5 16" stroke="#111" stroke-width="1"/><rect x="3.5" y="3.5" width="12.5" height="4" fill="#c81e74"/><rect x="4.5" y="4.3" width="10" height="1.2" fill="#f070b8"/><rect x="3.5" y="7.7" width="12.5" height="4" fill="#1f5fa8"/><rect x="4.5" y="8.5" width="10" height="1.2" fill="#8ac0f0"/><rect x="3.5" y="11.9" width="12.5" height="4" fill="#218a3c"/><rect x="4.5" y="12.7" width="10" height="1.2" fill="#7cd890"/><path d="M3.5 7.6H16M3.5 11.8H16M3.5 15.9H16M3.5 3.5V16" stroke="#111" stroke-width="0.8"/></svg>
<svg style="left:827px;top:717px" width="17" height="17" viewBox="0 0 17 17"><path d="M0 0H12.5L16 3.5H3.5Z" fill="#5a1030"/><path d="M0 0L3.5 3.5V16L0 12.5Z" fill="#fff"/><path d="M0 0.5L3.5 4M0 4.5L3.5 8M0 8.5L3.5 12M0 12.5L3.5 16" stroke="#111" stroke-width="1"/><rect x="3.5" y="3.5" width="12.5" height="4" fill="#c81e74"/><rect x="4.5" y="4.3" width="10" height="1.2" fill="#f070b8"/><rect x="3.5" y="7.7" width="12.5" height="4" fill="#1f5fa8"/><rect x="4.5" y="8.5" width="10" height="1.2" fill="#8ac0f0"/><rect x="3.5" y="11.9" width="12.5" height="4" fill="#218a3c"/><rect x="4.5" y="12.7" width="10" height="1.2" fill="#7cd890"/><path d="M3.5 7.6H16M3.5 11.8H16M3.5 15.9H16M3.5 3.5V16" stroke="#111" stroke-width="0.8"/></svg>
<svg style="left:827px;top:739px" width="17" height="17" viewBox="0 0 17 17"><path d="M0 0H12.5L16 3.5H3.5Z" fill="#5a1030"/><path d="M0 0L3.5 3.5V16L0 12.5Z" fill="#fff"/><path d="M0 0.5L3.5 4M0 4.5L3.5 8M0 8.5L3.5 12M0 12.5L3.5 16" stroke="#111" stroke-width="1"/><rect x="3.5" y="3.5" width="12.5" height="4" fill="#c81e74"/><rect x="4.5" y="4.3" width="10" height="1.2" fill="#f070b8"/><rect x="3.5" y="7.7" width="12.5" height="4" fill="#1f5fa8"/><rect x="4.5" y="8.5" width="10" height="1.2" fill="#8ac0f0"/><rect x="3.5" y="11.9" width="12.5" height="4" fill="#218a3c"/><rect x="4.5" y="12.7" width="10" height="1.2" fill="#7cd890"/><path d="M3.5 7.6H16M3.5 11.8H16M3.5 15.9H16M3.5 3.5V16" stroke="#111" stroke-width="0.8"/></svg>
<div class="a" style="left:0;top:1040px;width:1920px;height:40px;background:#080807"></div>
<div class="a" style="left:99px;top:1040px;width:48px;height:40px;background:#2d2d2d"></div>
<div class="a" style="left:99px;top:1078px;width:48px;height:2px;background:#76b9ed"></div>
<div class="a" style="left:201px;top:1078px;width:40px;height:2px;background:#76b9ed"></div>
<div class="a" style="left:348px;top:1078px;width:40px;height:2px;background:#76b9ed"></div>
<div class="a" style="left:397px;top:1078px;width:40px;height:2px;background:#76b9ed"></div>
<div class="a" style="left:495px;top:1078px;width:40px;height:2px;background:#76b9ed"></div>
<svg style="left:16px;top:1052px" width="17" height="17" viewBox="0 0 17 17"><path d="M0 2.3L7 1.3V8H0ZM8 1.2L17 0V8H8ZM0 9H7V15.7L0 14.7ZM8 9H17V17L8 15.8Z" fill="#fff"/></svg>
<svg style="left:64px;top:1052px" width="17" height="17" viewBox="0 0 17 17"><circle cx="10" cy="7" r="5.5" fill="none" stroke="#fff" stroke-width="1.4"/><path d="M6 11L1 16" stroke="#fff" stroke-width="1.6"/></svg>
<svg style="left:112px;top:1050px" width="22" height="20" viewBox="0 0 22 20"><path d="M0 1H8L10 3H22V19H0Z" fill="#f2c94c"/><path d="M0 4H22V19H0Z" fill="#fbe08e"/><path d="M1 12H21V19H1Z" fill="#2a8ad8"/><path d="M8 12H14V16H8Z" fill="#fbe08e"/></svg>
<svg style="left:161px;top:1049px" width="23" height="23" viewBox="0 0 23 23"><path d="M11.5 11.5L1.97 6A11 11 0 0 1 21.03 6Z" fill="#db4437"/><path d="M11.5 11.5L21.03 6A11 11 0 0 1 11.5 22.5Z" fill="#f4c20d"/><path d="M11.5 11.5L11.5 22.5A11 11 0 0 1 1.97 6Z" fill="#0f9d58"/><circle cx="11.5" cy="11.5" r="5.2" fill="#fff"/><circle cx="11.5" cy="11.5" r="4" fill="#4285f4"/></svg>
<svg style="left:210px;top:1050px" width="22" height="21" viewBox="0 0 22 21"><path d="M2 11C2 4 8 0 13 1C18 2 21 6 21 12H7C7 16 11 18 15 17C17 16.5 19 15.5 20 15V19C17 21 12 21.5 8 20C4 18.5 2 15 2 11ZM7 9H16C16 6 14 4.5 11.5 4.5C9 4.5 7 6.5 7 9Z" fill="#1f84d8"/><path d="M0 9C1 4 5 1 9 0.5C5 3 3 6 2.5 10Z" fill="#1f84d8"/></svg>
<svg style="left:258px;top:1050px" width="25" height="20" viewBox="0 0 25 20"><path d="M0 6L12.5 0L25 6V19H0Z" fill="#fff"/><path d="M1 6.5L24 8L16 9L22 15L13 9.5Z" fill="#0b0b0b"/></svg>
<svg style="left:308px;top:1048px" width="23" height="24" viewBox="0 0 23 24"><circle cx="11.5" cy="13" r="9.8" fill="none" stroke="#fff" stroke-width="1.5"/><path d="M1.5 6A4 4 0 0 1 6 1.5ZM21.5 6A4 4 0 0 0 17 1.5Z" fill="#fff" stroke="#fff"/><path d="M7 10.5L11.5 13L16 9" fill="none" stroke="#fff" stroke-width="1.5"/></svg>
<svg style="left:356px;top:1048px" width="24" height="24" viewBox="0 0 24 24"><rect x="0" y="0" width="24" height="24" rx="1" fill="#262626"/><text x="12" y="17" font-family="Liberation Sans" font-size="14" fill="#c8b44a" text-anchor="middle">DS</text></svg>
<svg style="left:406px;top:1049px" width="22" height="21" viewBox="0 0 22 21"><rect x="0.8" y="0.8" width="20.4" height="19.4" fill="#061e26" stroke="#31a8ff" stroke-width="1.6"/><text x="11" y="15" font-family="Liberation Sans" font-size="11" font-weight="bold" fill="#31a8ff" text-anchor="middle">Ps</text></svg>
<svg style="left:453px;top:1049px" width="26" height="24" viewBox="0 0 26 24"><path d="M20 4A10 10 0 1 0 22 19L18 15A5 5 0 1 1 16 8Z" fill="#d9372b"/><path d="M2 21L10 10L14 13L6 23Z" fill="#e8b890"/><path d="M10 10L16 4L18 7L14 13Z" fill="#2a6ab0"/></svg>
<svg style="left:504px;top:1049px" width="23" height="23" viewBox="0 0 23 23"><rect x="0.7" y="0.7" width="21.6" height="21.6" fill="none" stroke="#fff" stroke-width="1.4"/><path d="M1 21L9 9L13 14L16 11L22 19V22H1Z" fill="#fff"/></svg>
<svg style="left:1639px;top:1056px" width="12" height="7" viewBox="0 0 12 7"><path d="M0.8 6.2L6 1L11.2 6.2" fill="none" stroke="#fff" stroke-width="1.2"/></svg>
<svg style="left:1660px;top:1054px" width="17" height="11" viewBox="0 0 17 11"><path d="M2 10.5C0 10.5 0 6.5 3 6.5C3.5 3 8 1 10.5 4C13 2.5 16 4 15.5 7C17.5 7.5 17 10.5 15 10.5Z" fill="#fff"/></svg>
<svg style="left:1684px;top:1053px" width="18" height="14" viewBox="0 0 18 14"><path d="M3.5 1.5H17.5V10.5H3.5M10.5 10.5V13.5M6 13.5H14M0.5 0.5H5.5V4.5H0.5ZM3 4.5V9.5" fill="none" stroke="#fff" stroke-width="1"/></svg>
<svg style="left:1708px;top:1052px" width="18" height="15" viewBox="0 0 18 15"><path d="M0.5 5H4L8 1.5V13.5L4 10H0.5Z" fill="none" stroke="#fff"/><path d="M10.5 5A3 3 0 0 1 10.5 10M13 3A6 6 0 0 1 13 12" fill="none" stroke="#fff"/><path d="M15.5 1A9 9 0 0 1 15.5 14" fill="none" stroke="#777"/></svg>
<svg style="left:1737px;top:1052px" width="17" height="16" viewBox="0 0 17 16"><path d="M4 14L13 2L15 3.5L6 15Z" fill="none" stroke="#fff" stroke-width="1.2"/><path d="M2 15C0 14 1 11 3 12M13 6C16 6 16 9 14 9" fill="none" stroke="#fff"/></svg>
<div class="t" style="left:1767px;top:1053.0px;color:#fff;font-size:12px">ENG</div>
<div class="t" style="left:1818px;top:1044.0px;color:#fff;font-size:12px">20:35</div>
<div class="t" style="left:1803px;top:1061.0px;color:#fff;font-size:12px">09/07/2018</div>
<svg style="left:1879px;top:1052px" width="24" height="24" viewBox="0 0 24 24"><path d="M0.5 0.5H15.5V10.5H6L3 13.5V10.5H0.5Z" fill="#fff"/><path d="M3 3.5H13M3 6H13M3 8.5H10" stroke="#0b0b0b" stroke-width="0.9"/><circle cx="14.5" cy="15" r="6.5" fill="#333" stroke="#555"/><text x="14.5" y="19" font-family="Liberation Sans" font-size="10" font-weight="bold" fill="#fff" text-anchor="middle">1</text></svg>
<div class="a" style="left:1915px;top:1040px;width:1px;height:40px;background:#777"></div>
</body></html>
